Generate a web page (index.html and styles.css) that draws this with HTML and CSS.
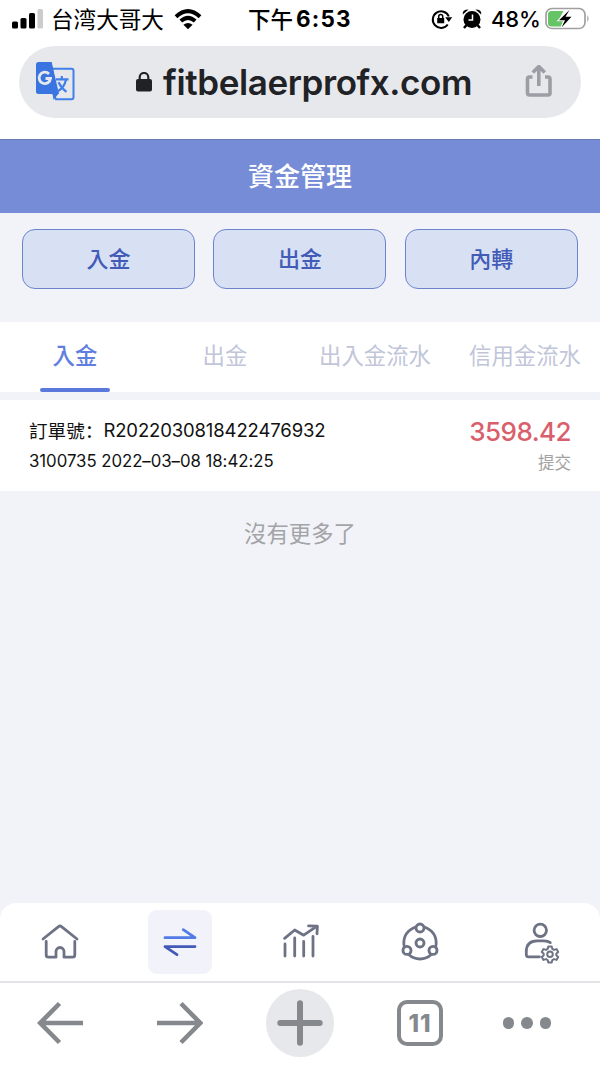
FILE: index.html
```html
<!DOCTYPE html>
<html lang="zh-Hant">
<head>
<meta charset="utf-8">
<meta name="viewport" content="width=device-width">
<title>資金管理</title>
<link rel="stylesheet" href="styles.css">
</head>
<body>
<div class="phone">
  <div class="status">
    <div class="status-left">
      <svg class="signal" width="32" height="22" viewBox="0 0 32 22"><rect x="0" y="13.500" width="6" height="7" rx="1.5"/><rect x="8.5" y="10" width="6" height="10.5" rx="1.5"/><rect x="17" y="5" width="6" height="15.500" rx="1.5"/><rect class="signal-off" x="25.500" y="1" width="5.500" height="19.500" rx="1.500"/></svg>
      <span class="carrier">台湾大哥大</span>
      <svg class="wifi" width="28" height="22" viewBox="0 0 28 22"><path d="M2 8.700Q14-2.500 26 8.700M6.800 13Q14 6.600 21.200 13"/><path class="solid" d="M9.400 16.800Q14 13 18.600 16.800L14 21.300Z"/></svg>
    </div>
    <div class="clock"><span class="ampm">下午</span><span class="time">6:53</span></div>
    <div class="status-right">
      <svg class="rotation" width="22" height="22" viewBox="0 0 22 22"><path class="ring" d="M16.800 16.500A8.300 8.300 0 1 1 17.800 8.500"/><path d="M14.200 9.200h7l-3.400 4.800zM6.200 10h7v5.200h-7z"/><path class="shackle" d="M7.700 10.500V8.600a2 2 0 0 1 4 0v1.900"/></svg>
      <svg class="alarm" width="20" height="22" viewBox="0 0 20 22"><circle cx="10" cy="11.400" r="8.500"/><path d="M.8 6.500Q0 1.500 6.500 1.500zM19.200 6.500Q20 1.500 13.500 1.500z"/><path class="legs" d="M4.500 17l-2.500 3M15.500 17l2.500 3"/><path class="hands" d="M10.500 6.500v5.500H6.500"/></svg>
      <span class="percent">48%</span>
      <svg class="battery" width="45" height="24" viewBox="0 0 45 24"><rect class="case" x="1" y="1.500" width="39" height="20" rx="6"/><path class="charge" d="M6.500 4h12L13 14h5l-2 5.500H6.500Q3 19.500 3 16v-8.500Q3 4 6.500 4z"/><path class="bolt" d="M24.500 3L14 13.200h6L16.500 20.500 26.500 9.800h-6z"/><path class="cap" d="M42.300 8q2.400 3.500 0 7z"/></svg>
    </div>
  </div>

  <div class="browser-top">
    <div class="address">
      <svg class="translate" width="40" height="40" viewBox="0 0 40 40"><path class="page" d="M17 6.700h19.500a2 2 0 0 1 2 2v26.500a2 2 0 0 1-2 2H21l-3-6"/><path class="fold" d="M17.500 31h6.500l-5.500 7z"/><path class="front" d="M3.500 0h13.200L24 32H3.500Q1 32 1 29.500v-27Q1 0 3.500 0z"/><path class="leaf" d="M19 9h18v26h-14l3-4-6-18z"/><path class="g" d="M14 12A5.700 5.700 0 1 0 15.500 16.500h-5"/><path class="wen" d="M21 17.300H33.500M26.800 14v3.300M31 17.500Q29.500 25.500 22.500 29.500M23.500 20.300Q26.500 26.500 31.500 29.800"/></svg>
      <div class="host"><svg class="padlock" width="16" height="20" viewBox="0 0 16 20"><rect x="0" y="7" width="16" height="12.500" rx="2"/><path d="M3.700 8V5.300a4.300 4.300 0 0 1 8.600 0V8"/></svg><span class="url">fitbelaerprofx.com</span></div>
      <svg class="share" width="28" height="34" viewBox="0 0 28 34"><path d="M7.500 12H4.500Q2.500 12 2.500 14V28Q2.500 30 4.500 30H23Q25 30 25 28V14Q25 12 23 12H20M13.800 21V2M7.800 7.500L13.800 1.500L19.800 7.500"/></svg>
    </div>
  </div>

  <h1 class="title">資金管理</h1>

  <div class="content">
    <div class="actions">
      <button class="action">入金</button>
      <button class="action">出金</button>
      <button class="action">內轉</button>
    </div>
    <div class="tabs">
      <div class="tab tab-active">入金</div>
      <div class="tab">出金</div>
      <div class="tab">出入金流水</div>
      <div class="tab">信用金流水</div>
    </div>
    <div class="record">
      <div class="record-main">
        <div class="order"><span class="order-label">訂單號<span lang="zh-Hans">：</span></span><span class="order-no">R2022030818422476932</span></div>
        <div class="meta">3100735 2022–03–08 18:42:25</div>
      </div>
      <div class="record-side">
        <div class="amount">3598.42</div>
        <div class="state">提交</div>
      </div>
    </div>
    <div class="end">沒有更多了</div>
  </div>

  <div class="nav-wrap">
    <div class="nav">
      <svg class="nav-item" viewBox="0 0 64 64"><path d="M15 29L30.500 16.600Q32 15.300 33.500 16.600L49 29M18.200 31.500V45Q18.200 47.200 20.400 47.200H28V41.500a4 4 0 0 1 8 0V47.200H44.600Q46.800 47.200 46.800 45V31.500"/></svg>
      <svg class="nav-item nav-active" viewBox="0 0 64 64"><path class="to" d="M17 27.700H47L35.200 19.700"/><path class="from" d="M47 36.600H17L29 44.700"/></svg>
      <svg class="nav-item" viewBox="0 0 64 64"><path d="M17 34V46M26.700 28V46M35.700 31.500V46M45 26.500V46M16.600 28.300L26.700 20L35.700 25.200L49 16.200M40.500 15.900L49.400 16.200L49 23.800"/></svg>
      <svg class="nav-item" viewBox="0 0 64 64"><circle cx="32" cy="32.800" r="16.200"/><g class="node"><circle cx="32" cy="18" r="4"/><circle cx="19" cy="40.400" r="4"/><circle cx="45" cy="40.400" r="4"/><circle cx="32" cy="33" r="4"/></g></svg>
      <svg class="nav-item" viewBox="0 0 64 64"><circle cx="32.300" cy="20.300" r="6.200"/><path d="M31.500 46.800H20.500Q18.300 46.800 18.300 44.500V41.500Q18.300 31 29 30.800H36Q40 30.900 42.300 32.600"/><g class="gear"><path d="M40.300 36.400h3.400l.6 2.500 1.700 1 2.500-.8 1.700 2.900-1.900 1.700v1.600l1.900 1.700-1.700 2.900-2.500-.8-1.700 1-.6 2.300h-3.400l-.6-2.300-1.700-1-2.500.8-1.700-2.900 1.900-1.700v-1.600l-1.900-1.700 1.700-2.900 2.500.8 1.700-1z"/><circle cx="42" cy="44.200" r="2.800"/></g></svg>
    </div>
  </div>

  <div class="toolbar">
    <svg class="tool" width="46" height="44" viewBox="0 0 46 44"><path d="M46 22H3M22.500 2.500L3.200 22L22.500 41.500"/></svg>
    <svg class="tool" width="46" height="44" viewBox="0 0 46 44"><path d="M0 22H43M24 2.500L43.300 22L24 41.500"/></svg>
    <div class="new-tab"><svg width="46" height="46" viewBox="0 0 46 46"><path d="M3.300 23H42.700M23 3.300V42.700"/></svg></div>
    <div class="tab-count">11</div>
    <div class="more"><i></i><i></i><i></i></div>
  </div>
</div>
</body>
</html>
```
FILE: styles.css
```css
* { box-sizing: border-box; }
body { margin: 0; font-family: Inter, "Noto Sans CJK TC", sans-serif; background: #fff; }
svg { display: block; flex: none; }
.phone { width: 600px; height: 1065px; display: flex; flex-direction: column; overflow: hidden; }

.status { height: 38px; flex: none; display: grid; grid-template-columns: 248px 183px 1fr; align-items: center; white-space: nowrap; color: #000; }
.status-left { display: flex; align-items: center; padding-left: 12px; }
.signal-off { fill: #ccc; }
.carrier { font: 400 22.600px/38px "Noto Sans CJK SC", sans-serif; margin: 0 10px 0 7px; }
.wifi path { fill: none; stroke: #000; stroke-width: 4; }
.wifi .solid { fill: #000; stroke: none; }
.clock { display: flex; line-height: 38px; }
.ampm { font-family: "Noto Sans CJK SC", sans-serif; font-weight: 500; font-size: 22.500px; line-height: 36px; margin-right: 3px; }
.time { font-weight: 700; font-size: 22.500px; letter-spacing: 1.200px; }
.status-right { display: flex; align-items: center; }
.rotation .ring, .rotation .shackle { fill: none; stroke: #000; stroke-width: 2; }
.rotation .shackle { stroke-width: 1.500; }
.alarm { margin-left: 9px; }
.alarm .legs { stroke: #000; stroke-width: 2.500; }
.alarm .hands { fill: none; stroke: #fff; stroke-width: 1.500; }
.percent { font-size: 22px; font-weight: 500; margin-left: 9px; width: 54px; letter-spacing: -.2px; }
.battery .case { fill: none; stroke: #a0a0a0; stroke-width: 1.700; }
.battery .charge { fill: #64c466; }
.battery .bolt { stroke: #fff; stroke-width: 2; paint-order: stroke; }
.battery .cap { fill: #999; }

.browser-top { height: 101px; flex: none; padding: 8px 19px 0; }
.address { height: 72px; border-radius: 36px; background: #e7e8ec; display: grid; grid-template-columns: 40px 1fr 28px; align-items: center; padding: 0 28px 0 16px; }
.translate .page { fill: #e7e8ec; stroke: #4080e8; stroke-width: 2; }
.translate .front, .translate .fold { fill: #3a74e0; }
.translate .leaf { fill: #e7e8ec; }
.translate .g { fill: none; stroke: #e7e8ec; stroke-width: 2.800; }
.translate .wen { fill: none; stroke: #4080e8; stroke-width: 2.200; }
.host { display: flex; align-items: center; padding-left: 61px; }
.padlock { fill: #212226; }
.padlock path { fill: none; stroke: #212226; stroke-width: 2.200; }
.url { font-size: 35px; font-weight: 600; letter-spacing: -.4px; color: #212226; margin-left: 11px; line-height: 70px; white-space: nowrap; }
.share { fill: none; stroke: #9b9ea4; stroke-width: 3.600; stroke-linejoin: round; }

.title { margin: 0; height: 74px; flex: none; background: #768cd6; border-top: 1px solid #687bb9; color: #fff; font: 500 26px/69px "Noto Sans CJK TC", sans-serif; text-align: center; }

.content { flex: 1; background: #f2f3f8; }
.actions { display: grid; grid-template-columns: repeat(3, 173px); column-gap: 18.300px; padding: 16px 0 0 22.100px; height: 109px; align-items: start; }
.action { height: 60px; padding: 0 0 3px; border: 1px solid #6c84ce; border-radius: 13px; background: #d8e1f3; color: #415bb7; font: 500 22px/55px "Noto Sans CJK TC", sans-serif; }
.tabs { height: 70px; display: grid; grid-template-columns: repeat(4, 1fr); background: #fff; font-family: "Noto Sans CJK TC", sans-serif; }
.tab { display: flex; flex-direction: column; align-items: center; font-size: 22.400px; line-height: 64px; color: #c1c5d9; font-weight: 400; white-space: nowrap; }
.tab-active { color: #5f7ee0; font-weight: 500; }
.tab-active::after { content: ""; width: 70px; height: 4px; margin-top: 2px; border-radius: 2px; background: #5b79dd; }
.record { margin-top: 8px; height: 91px; background: #fff; display: flex; justify-content: space-between; padding: 15px 29px 0; color: #111; }
.order { display: flex; height: 30px; line-height: 30px; white-space: nowrap; }
.order-label { font-family: "Noto Sans CJK TC", sans-serif; font-size: 18.600px; }
.order-label span { font-family: "Noto Sans CJK SC", sans-serif; }
.order-no { font-size: 18.500px; letter-spacing: -.13px; line-height: 31px; }
.meta { font-size: 16.800px; letter-spacing: -.04px; line-height: 32px; white-space: nowrap; }
.record-side { text-align: right; }
.amount { font-size: 26px; font-weight: 500; letter-spacing: -.55px; line-height: 33px; color: #da5f6d; }
.state { font-size: 16.500px; line-height: 28px; color: #a2a2a2; font-family: "Noto Sans CJK TC", sans-serif; }
.end { margin-top: 23px; text-align: center; font: 400 22.400px/36px "Noto Sans CJK TC", sans-serif; color: #a3a4a7; }

.nav-wrap { background: #f2f3f8; flex: none; }
.nav { height: 78px; background: #fff; border-radius: 16px 16px 0 0; display: grid; grid-template-columns: repeat(5, 1fr); justify-items: center; padding-top: 7px; }
.nav-item { width: 64px; height: 64px; border-radius: 9px; fill: none; stroke: #6d7385; stroke-width: 2.800; stroke-linecap: round; stroke-linejoin: round; }
.nav-active { background: #f2f3fa; }
.nav-active .to { stroke: #537be5; }
.nav-active .from { stroke: #4259b5; }
.node { fill: #fff; stroke-width: 2.900; }
.gear { stroke-width: 2; }

.toolbar { height: 84px; flex: none; border-top: 2px solid #e2e3e6; display: grid; grid-template-columns: 120px 120px 120px 120px 94px; justify-items: center; align-items: center; padding-bottom: 2px; }
.tool { fill: none; stroke: #85888c; stroke-width: 4.600; }
.new-tab { width: 68px; height: 68px; border-radius: 50%; background: #e7e8ec; display: grid; place-items: center; }
.new-tab svg { stroke: #85888c; stroke-width: 6; stroke-linecap: round; }
.tab-count { width: 46px; height: 46px; border: 4px solid #85888c; border-radius: 10px; display: grid; place-items: center; color: #85888c; font-size: 24px; font-weight: 800; letter-spacing: .8px; }
.more { display: flex; gap: 7px; }
.more i { width: 11.600px; height: 11.600px; border-radius: 50%; background: #85888c; }
```
